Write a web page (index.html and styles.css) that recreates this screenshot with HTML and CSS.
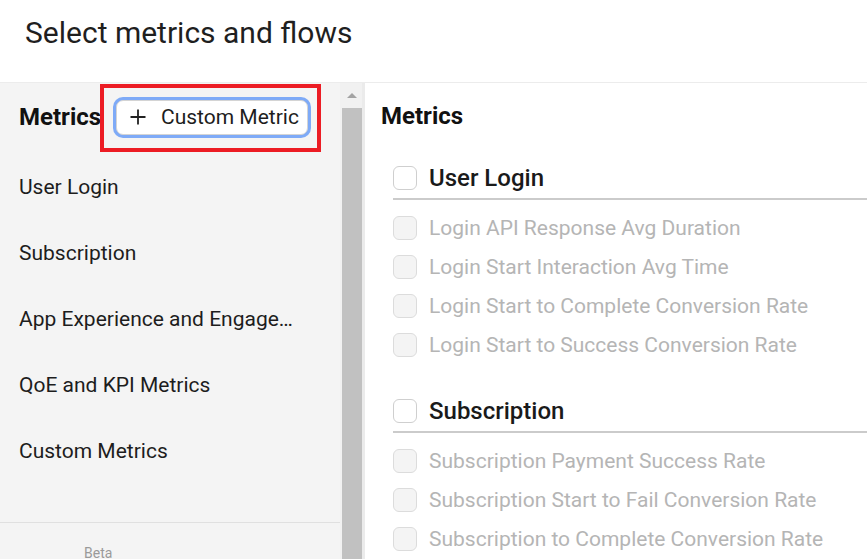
FILE: index.html
```html
<!DOCTYPE html>
<html lang="en">
<head>
<meta charset="utf-8">
<title>Select metrics and flows</title>
<link rel="stylesheet" href="styles.css">
</head>
<body>
<header class="header">
  <h1 class="title">Select metrics and flows</h1>
</header>
<div class="main">
  <aside class="sidebar">
    <div class="side-head">
      <h2 class="side-title">Metrics</h2>
      <div class="btn-wrap">
        <button class="btn-add" type="button">
          <svg class="plus" width="18" height="18" viewBox="0 0 18 18" aria-hidden="true"><path d="M9 1.5v15M1.5 9h15" stroke="#222" stroke-width="1.8" fill="none"/></svg>
          <span>Custom Metric</span>
        </button>
        <span class="annot"></span>
      </div>
    </div>
    <ul class="nav">
      <li>User Login</li>
      <li>Subscription</li>
      <li>App Experience and Engage…</li>
      <li>QoE and KPI Metrics</li>
      <li>Custom Metrics</li>
    </ul>
    <div class="side-foot"><span class="beta">Beta</span></div>
  </aside>
  <div class="scrollbar">
    <div class="arrow"></div>
    <div class="thumb"></div>
  </div>
  <div class="divider"></div>
  <section class="content">
    <h2 class="content-title">Metrics</h2>
    <div class="group">
      <div class="group-head"><span class="cb"></span><span>User Login</span></div>
      <div class="row"><span class="cb dis"></span><span>Login API Response Avg Duration</span></div>
      <div class="row"><span class="cb dis"></span><span>Login Start Interaction Avg Time</span></div>
      <div class="row"><span class="cb dis"></span><span>Login Start to Complete Conversion Rate</span></div>
      <div class="row"><span class="cb dis"></span><span>Login Start to Success Conversion Rate</span></div>
    </div>
    <div class="group">
      <div class="group-head"><span class="cb"></span><span>Subscription</span></div>
      <div class="row"><span class="cb dis"></span><span>Subscription Payment Success Rate</span></div>
      <div class="row"><span class="cb dis"></span><span>Subscription Start to Fail Conversion Rate</span></div>
      <div class="row"><span class="cb dis"></span><span>Subscription to Complete Conversion Rate</span></div>
    </div>
  </section>
</div>
</body>
</html>
```
FILE: styles.css
```css
* { box-sizing: border-box; }
html, body { margin: 0; padding: 0; }
body {
  font-family: Roboto, "Liberation Sans", Arial, sans-serif;
  background: #fff;
  color: #222;
  width: 867px;
  height: 559px;
  overflow: hidden;
}
.header {
  height: 83px;
  border-bottom: 1px solid #ececec;
  padding: 15px 0 0 25px;
}
.title {
  margin: 0;
  font-size: 30px;
  font-weight: 400;
  line-height: 36px;
  color: #1f1f1f;
}
.main {
  display: flex;
  height: 476px;
}
.sidebar {
  width: 340px;
  background: #f4f4f4;
  display: flex;
  flex-direction: column;
  overflow: hidden;
}
.side-head {
  flex: none;
  height: 68px;
  display: flex;
  align-items: center;
  padding: 0 0 0 19px;
}
.side-title {
  margin: 0;
  font-size: 24px;
  font-weight: 700;
  color: #111;
  width: 97px;
  flex: none;
}
.btn-wrap {
  position: relative;
  display: flex;
}
.btn-add {
  width: 192px;
  height: 35px;
  display: flex;
  align-items: center;
  gap: 14px;
  padding: 0 0 0 12px;
  background: #fff;
  border: 1px solid #d4d4d4;
  border-radius: 7px;
  box-shadow: 0 0 0 3px #7eaaf7;
  font-family: inherit;
  font-size: 21px;
  color: #1d1d1d;
  cursor: pointer;
}
.plus { flex: none; }
.annot {
  position: absolute;
  left: -16px;
  top: -16px;
  width: 221px;
  height: 68px;
  border: 4px solid #ec1c24;
  pointer-events: none;
}
.nav {
  flex: none;
  list-style: none;
  margin: 0;
  padding: 3px 0 0;
}
.nav li {
  height: 66px;
  display: flex;
  align-items: center;
  padding-left: 19px;
  font-size: 21px;
  color: #1d1d1d;
}
.side-foot {
  flex: none;
  margin-top: 38px;
  border-top: 1px solid #e0e0e0;
  padding: 20px 0 0 84px;
}
.beta {
  font-size: 14px;
  color: #9a9a9a;
}
.scrollbar {
  width: 22px;
  background: #f1f1f1;
  display: flex;
  flex-direction: column;
  align-items: center;
}
.arrow {
  width: 0;
  height: 0;
  margin: 10px 0 0 1px;
  border-left: 5px solid transparent;
  border-right: 5px solid transparent;
  border-bottom: 5px solid #a3a3a3;
}
.thumb {
  margin: 10px 0 0 2px;
  width: 20px;
  flex: 1;
  background: #c1c1c1;
}
.divider {
  width: 3px;
  background: #ebebeb;
}
.content {
  flex: 1;
  padding-left: 16px;
}
.content-title {
  margin: 0;
  height: 66px;
  display: flex;
  align-items: center;
  font-size: 24px;
  font-weight: 700;
  color: #111;
}
.group {
  margin-left: 12px;
  margin-top: 11px;
}
.group + .group { margin-top: 29px; }
.group-head {
  height: 36px;
  display: flex;
  align-items: center;
  gap: 12px;
  font-size: 24px;
  font-weight: 500;
  color: #1a1a1a;
  border-bottom: 2px solid #cbcbcb;
  box-sizing: content-box;
  padding-bottom: 2px;
}
.row {
  height: 39px;
  display: flex;
  align-items: center;
  gap: 12px;
  font-size: 21px;
  color: #b5b5b5;
}
.group-head + .row { margin-top: 8px; }
.cb {
  width: 24px;
  height: 24px;
  flex: none;
  border: 1px solid #cfcfcf;
  border-radius: 6px;
  background: #fff;
}
.cb.dis {
  background: #f4f4f4;
  border-color: #dcdcdc;
}
```
